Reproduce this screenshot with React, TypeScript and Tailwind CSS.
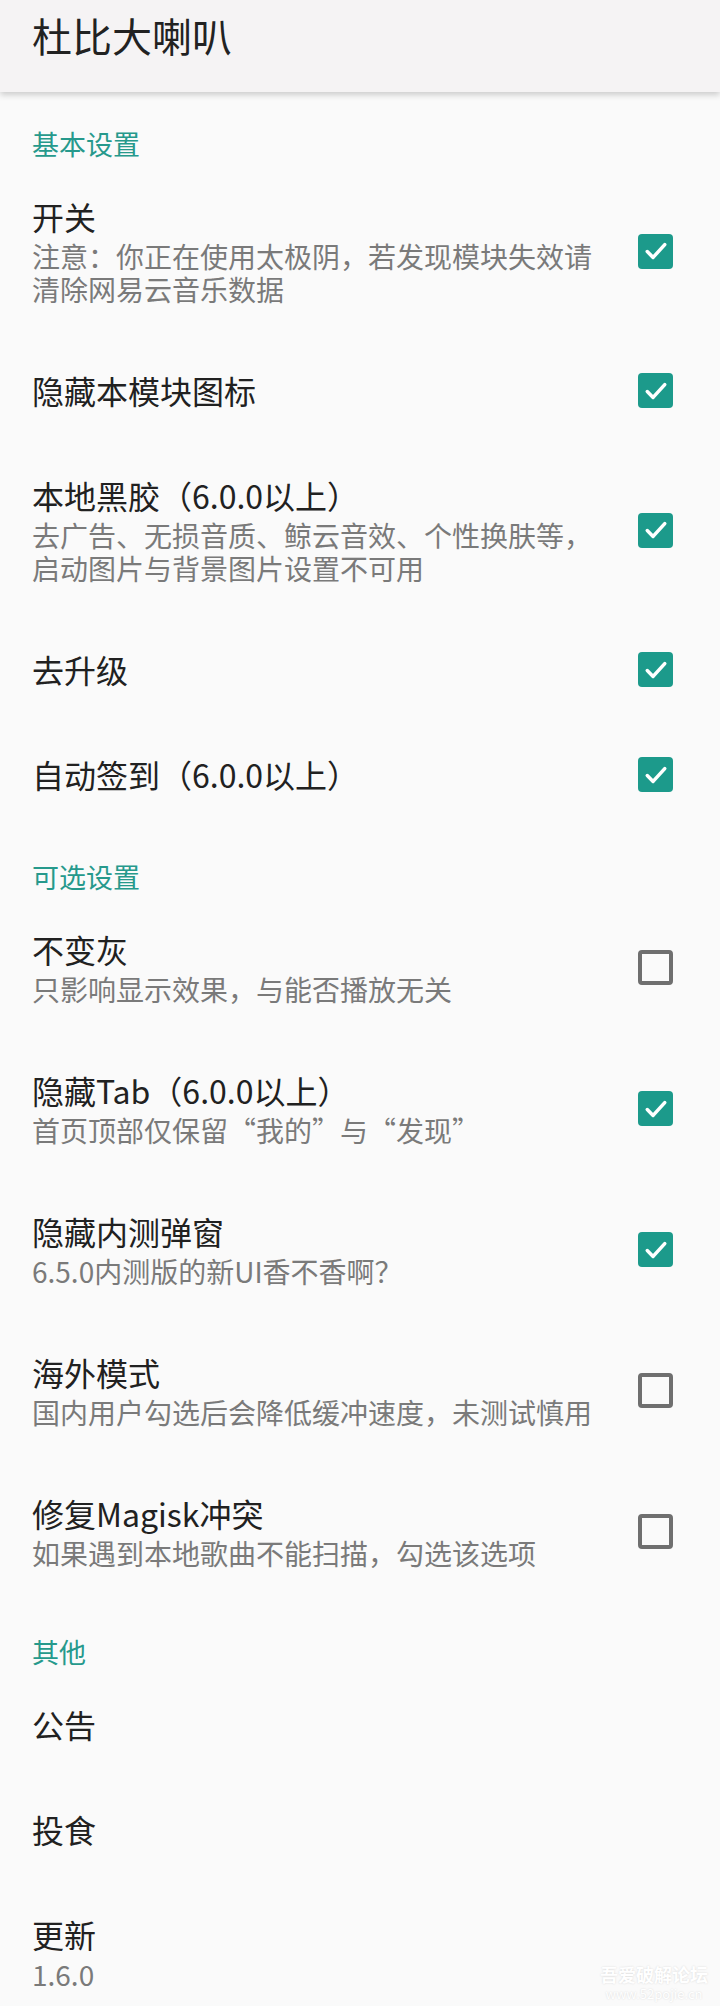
import { Fragment } from "react"

type Item = {
  title: string
  summary?: string[]
  checked?: boolean
}

type Section = {
  name: string
  items: Item[]
}

const sections: Section[] = [
  {
    name: "基本设置",
    items: [
      {
        title: "开关",
        summary: ["注意：你正在使用太极阴，若发现模块失效请", "清除网易云音乐数据"],
        checked: true,
      },
      { title: "隐藏本模块图标", checked: true },
      {
        title: "本地黑胶（6.0.0以上）",
        summary: ["去广告、无损音质、鲸云音效、个性换肤等，", "启动图片与背景图片设置不可用"],
        checked: true,
      },
      { title: "去升级", checked: true },
      { title: "自动签到（6.0.0以上）", checked: true },
    ],
  },
  {
    name: "可选设置",
    items: [
      { title: "不变灰", summary: ["只影响显示效果，与能否播放无关"], checked: false },
      { title: "隐藏Tab（6.0.0以上）", summary: ["首页顶部仅保留“我的”与“发现”"], checked: true },
      { title: "隐藏内测弹窗", summary: ["6.5.0内测版的新UI香不香啊？"], checked: true },
      { title: "海外模式", summary: ["国内用户勾选后会降低缓冲速度，未测试慎用"], checked: false },
      { title: "修复Magisk冲突", summary: ["如果遇到本地歌曲不能扫描，勾选该选项"], checked: false },
    ],
  },
  {
    name: "其他",
    items: [{ title: "公告" }, { title: "投食" }, { title: "更新", summary: ["1.6.0"] }],
  },
]

function CheckBox({ checked }: { checked: boolean }) {
  if (checked) {
    return (
      <div className="flex h-[35px] w-[35px] items-center justify-center rounded-[4px] bg-[#1c9a8b]">
        <svg viewBox="0 0 24 24" className="h-[28px] w-[28px]" fill="none">
          <path d="M4.5 12.5l5 5 10-11" stroke="#ffffff" strokeWidth="3" strokeLinecap="round" strokeLinejoin="round" />
        </svg>
      </div>
    )
  }
  return <div className="h-[35px] w-[35px] rounded-[4px] border-[4px] border-[#6f6f6f]" />
}

export default function App() {
  return (
    <div
      className="relative h-[2006px] w-[720px] overflow-hidden bg-[#fafafa]"
      style={{ fontFamily: '"Noto Sans CJK SC", "Noto Sans", sans-serif' }}
    >
      <header className="relative z-10 flex h-[92px] items-center bg-[#f5f3f4] pb-[22px] pl-[32px] shadow-[0_3px_6px_rgba(0,0,0,0.18)]">
        <h1 className="text-[40px] leading-[48px] text-[#222222]">杜比大喇叭</h1>
      </header>

      <main>
        {sections.map((section, sectionIndex) => (
          <Fragment key={section.name}>
            <div
              className={`${sectionIndex === 0 ? "pt-[38px]" : "pt-[36px]"} pb-[6px] pl-[32px] text-[27px] leading-[28px] text-[#26998c]`}
            >
              {section.name}
            </div>
            {section.items.map((item) => (
              <div key={item.title} className="flex items-center py-[32px] pl-[32px] pr-[47px]">
                <div className="flex-1">
                  <div className="text-[32px] leading-[41px] text-[#212121]">{item.title}</div>
                  {item.summary && (
                    <div className="mt-[3px] text-[28px] leading-[33px] text-[#7a7a7a]">
                      {item.summary.map((line) => (
                        <div key={line}>{line}</div>
                      ))}
                    </div>
                  )}
                </div>
                {item.checked !== undefined && <CheckBox checked={item.checked} />}
              </div>
            ))}
          </Fragment>
        ))}
      </main>

      <div className="pointer-events-none absolute bottom-[4px] right-[12px] flex flex-col items-center text-white [text-shadow:0_0_2px_rgba(0,0,0,0.15)]">
        <span className="text-[18px] leading-[24px] font-bold">吾爱破解论坛</span>
        <span className="text-[13px] leading-[16px]">www.52pojie.cn</span>
      </div>
    </div>
  )
}
